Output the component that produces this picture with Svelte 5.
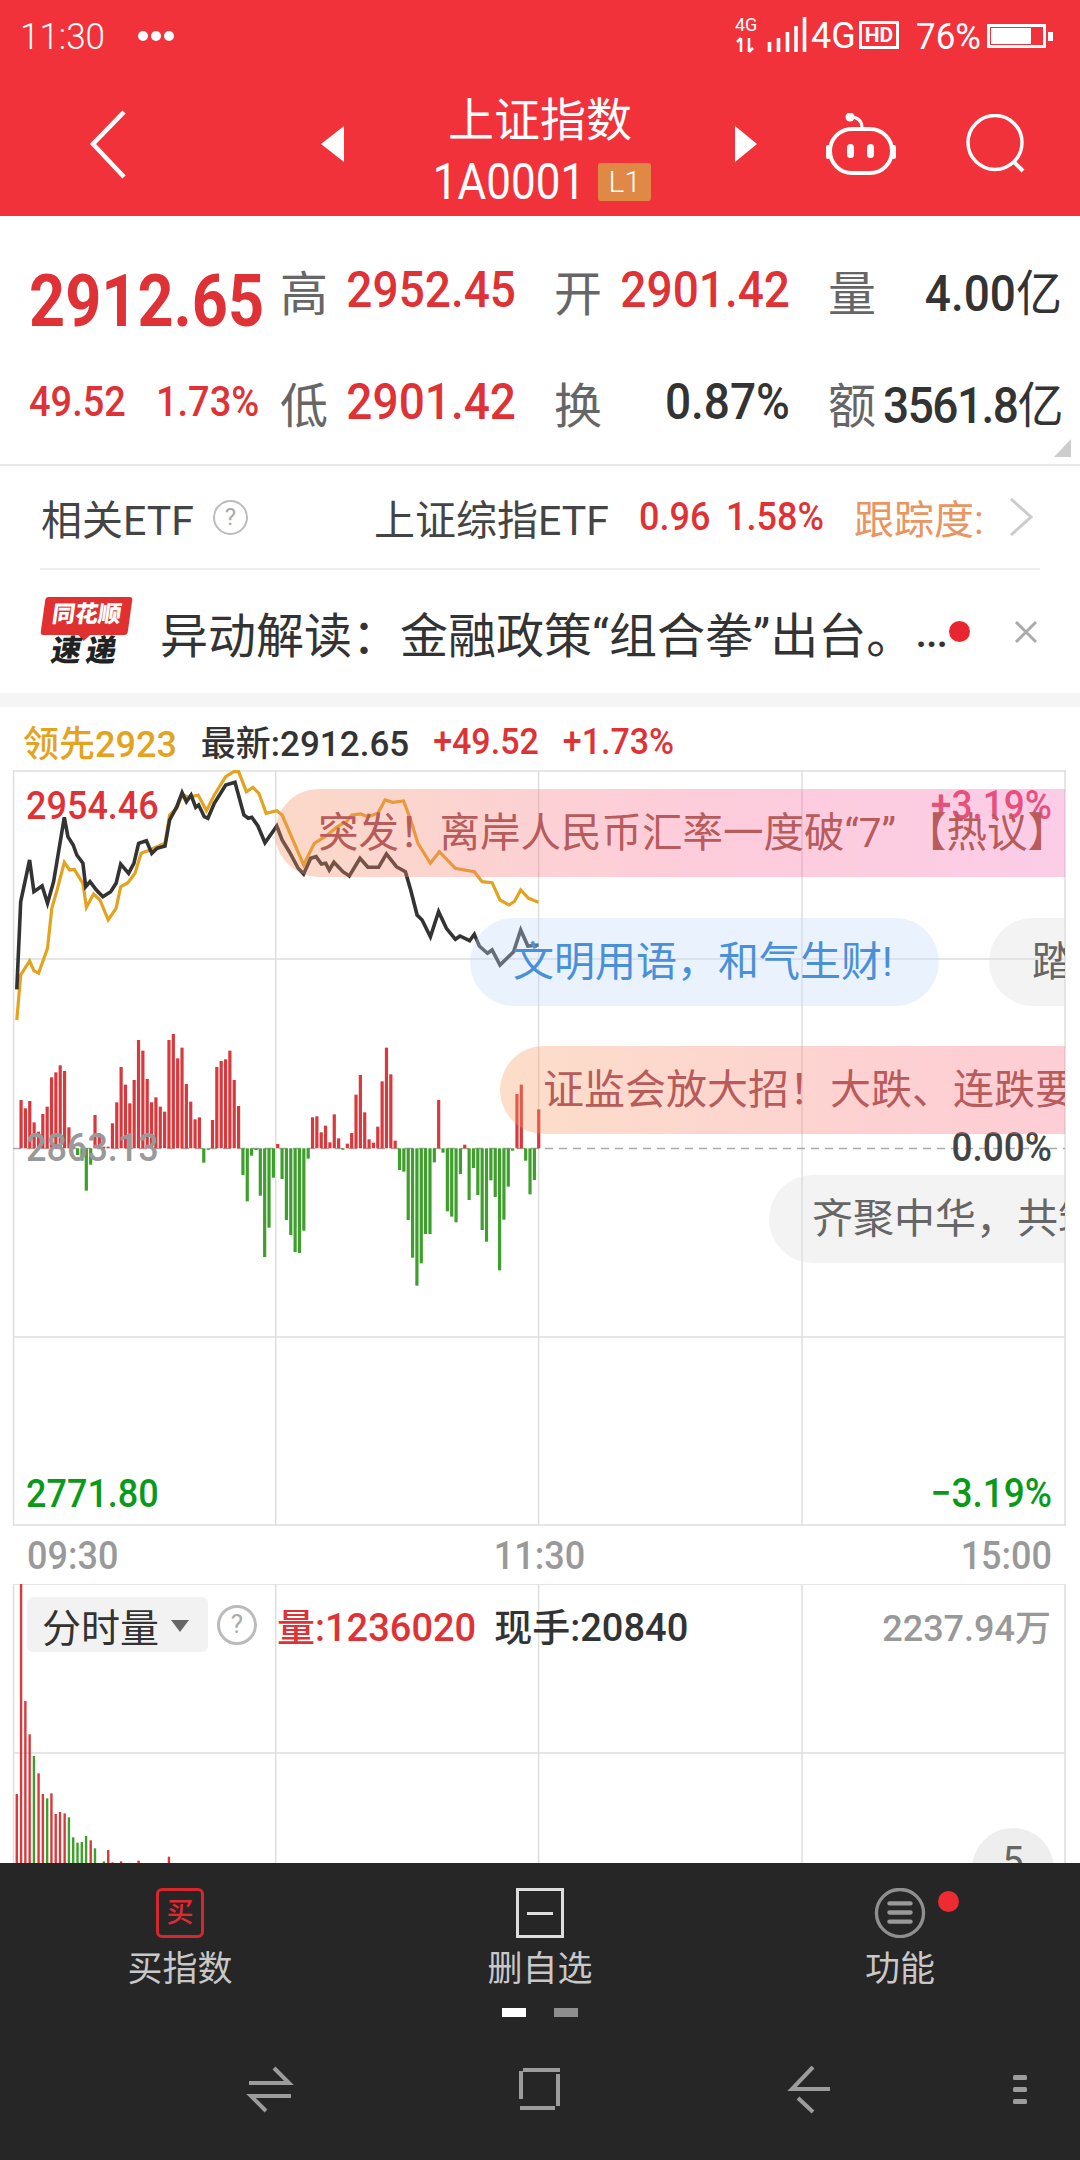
<script>
  // picture coords for the lines, read off at x*2.8, (y-700)*3
  const black = [47,868,58,605,83,480,95,575,118,558,133,610,150,545,180,352,190,410,205,435,215,465,232,490,240,560,252,545,270,570,288,590,310,575,325,550,338,492,360,520,375,490,388,430,410,422,425,460,440,445,462,438,475,360,495,320,510,278,522,305,535,285,548,322,556,315,572,350,582,355,600,310,632,255,658,247,683,345,695,355,705,352,722,378,742,428,775,378,790,420,810,455,835,505,850,522,870,475,885,470,900,492,912,490,922,510,935,487,960,515,978,528,1008,475,1030,502,1060,502,1082,462,1110,500,1135,515,1150,570,1168,645,1182,660,1205,710,1228,635,1250,685,1275,718,1288,708,1315,722,1328,703,1342,738,1365,760,1378,750,1400,795,1438,755,1458,690,1478,738,1508,735];
  const gold = [47,960,58,825,83,783,95,812,108,820,133,745,145,625,160,570,180,487,195,510,208,508,232,550,242,622,262,582,280,600,303,660,325,625,338,560,358,548,378,520,395,460,420,450,440,440,462,430,475,345,495,325,510,285,530,292,555,285,578,332,600,285,632,230,655,215,668,215,690,275,708,262,725,280,745,340,775,332,790,345,820,420,850,495,880,430,910,410,945,380,970,365,985,345,1010,342,1030,350,1058,340,1078,300,1100,307,1130,303,1150,360,1170,430,1205,490,1230,455,1275,505,1300,510,1328,515,1350,545,1378,548,1400,600,1425,615,1440,605,1458,570,1480,595,1508,607];
  // top of bar (red, r) or bottom of bar (green, g), same scale
  const flow = [
    "r300","r325","r303","r367","r395","r342","r320","r232","r217","r196","r213","r382","r440","g465","g482","g572","g494","r345","r400","r440",
    "r440","r370","r307","r201","r254","r310","r240","r120","r152","r237","r307","r292","r320","r335","r120","r102","r175","r143","r252","r305",
    "r358","r352","g488","g447","r360","r201","r183","r178","r152","r240","r318","g525","g604","g467","g450","g587","g771","g683","g533","r432",
    "g537","g660","g705","g756","g759","g692","g476","r352","r349","r397","r377","r427","r343","r415","g448","r431","r399","r284","r225","r337",
    "r418","r428","r380","r244","r143","r223","r422","g510","g515","g660","g773","g857","g790","g702","g702","g487","r300","g458","g634","g650",
    "g667","g522","r434","g600","g504","g585","g690","g725","g541","g591","g811","g659","g560","g452","r282","r254","g482","g583","g540","r328"
  ];
  const flowBars = flow.map((b, i) => {
    const y = 1000 + Number(b.slice(1)) / 3;
    const base = 1148.3;
    return {
      x: (59 + i * 12.18) / 2.8 - 1.6,
      y: Math.min(y, base),
      h: Math.max(Math.abs(y - base), 1.5),
      up: b[0] === "r",
    };
  });
  const volume = [
    [47,822,1],[59,190,1],[71,543,1],[83,643,1],[95,708,0],[108,760,1],[120,822,1],[132,835,0],[144,820,1],[156,882,1],[168,876,1],[181,880,1],[193,892,0],
    [205,952,0],[217,968,0],[229,966,0],[241,948,0],[254,961,1],[266,985,0],[291,1024,0],[303,990,1],[315,1027,1],[339,1024,1],[388,1022,1],[473,1010,1]
  ];
  const line = (a) => {
    let out = [];
    for (let i = 0; i < a.length; i += 2) out.push(`${(a[i] / 2.8).toFixed(1)},${(700 + a[i + 1] / 3).toFixed(1)}`);
    return out.join(" ");
  };
  const vlines = [13.6, 275.7, 538.6, 802, 1065];
</script>

<div class="app">
  <header class="top">
    <div class="status">
      <span class="clock">11:30</span>
      <span class="more"><i></i><i></i><i></i></span>
      <svg class="net" width="72" height="40" viewBox="733 17 72 40">
        <text x="733" y="32" fill="#fff" font-size="18" font-family="Roboto">4G</text>
        <path d="M739 53V39M735 43l4-4M747 39v14M751 49l-4 4" stroke="#fff" stroke-width="2.500" fill="none" />
        <path d="M767.500 53V43M776.500 53V39M785.500 53V33M794 53V27M802.500 53V18" stroke="#fff" stroke-width="3.600" fill="none" />
      </svg>
      <span class="sig">4G</span>
      <span class="hd">HD</span>
      <span class="pct">76%</span>
      <span class="batt"><i></i></span>
      <span class="nub"></span>
    </div>
    <nav class="bar">
      <svg class="back" width="40" height="70" viewBox="0 0 40 70"><path d="M34 3 3 35l31 33" fill="none" stroke="#fff" stroke-width="4.500" /></svg>
      <span class="tri left"></span>
      <div class="title">
        <div class="name">上证指数</div>
        <div class="code"><span class="digits">1A0001</span><span class="lv">L1</span></div>
      </div>
      <span class="tri right"></span>
      <svg class="robot" width="70" height="62" viewBox="826 111 70 62">
        <rect x="830" y="127" width="62" height="44" rx="22" fill="none" stroke="#fff" stroke-width="4" />
        <path d="M828 145v10M894 145v10" stroke="#fff" stroke-width="4" stroke-linecap="round" />
        <path d="M850 115q12 0 12 11" fill="none" stroke="#fff" stroke-width="3" />
        <circle cx="850" cy="115" r="4.500" fill="#fff" />
        <rect x="847" y="142" width="7" height="14" rx="3.500" fill="#fff" />
        <rect x="867" y="142" width="7" height="14" rx="3.500" fill="#fff" />
      </svg>
      <svg class="search" width="60" height="60" viewBox="966 114 60 60">
        <circle cx="995" cy="142.500" r="27" fill="none" stroke="#fff" stroke-width="3.500" />
        <path d="M1014 162l9 9" stroke="#fff" stroke-width="4" />
      </svg>
    </nav>
  </header>

  <section class="quote">
    <div class="price red">2912.65</div>
    <div class="cell"><b>高</b><span class="red">2952.45</span></div>
    <div class="cell"><b>开</b><span class="red">2901.42</span></div>
    <div class="cell last"><b>量</b><span>4.00<em>亿</em></span></div>
    <div class="chg red"><span>49.52</span><span>1.73%</span></div>
    <div class="cell"><b>低</b><span class="red">2901.42</span></div>
    <div class="cell"><b>换</b><span>0.87%</span></div>
    <div class="cell last"><b>额</b><span class="tight">3561.8<em>亿</em></span></div>
    <span class="corner"></span>
  </section>

  <div class="etf">
    <span class="etf-label">相关ETF</span>
    <span class="help">?</span>
    <span class="etf-name">上证综指ETF</span>
    <span class="etf-val red">0.96</span>
    <span class="etf-pct red">1.58%</span>
    <span class="etf-track">跟踪度:</span>
    <svg class="chev" width="24" height="38" viewBox="0 0 24 38"><path d="M2 1l20 18L2 37" fill="none" stroke="#ccc" stroke-width="3" /></svg>
  </div>

  <div class="news">
    <div class="logo">
      <div class="logo-top">同花顺</div>
      <div class="logo-bot">速递</div>
    </div>
    <div class="news-text">异动解读：金融政策“组合拳”出台。</div>
    <span class="news-more">...</span>
    <span class="news-dot"></span>
    <svg class="news-x" width="24" height="24" viewBox="0 0 24 24"><path d="M2 2l20 20M22 2L2 22" stroke="#aaa" stroke-width="3" /></svg>
  </div>

  <div class="strip"></div>

  <div class="legend">
    <span class="gold">领先2923</span>
    <span class="now">最新:2912.65</span>
    <span class="red">+49.52</span>
    <span class="red">+1.73%</span>
  </div>

  <div class="chart">
    <svg width="1080" height="756" viewBox="0 770 1080 756">
      <g stroke="#dedede" stroke-width="1.500">
        <path d="M13 771H1065M13 959H1065M13 1337H1065M13 1525H1065" />
        {#each vlines as x}
          <path d="M{x} 770V1526" />
        {/each}
      </g>
      <path d="M13 1148.500H1065" stroke="#aaa" stroke-width="1.500" stroke-dasharray="8 6" />
      {#each flowBars as b}
        <rect x={b.x} y={b.y} width="3.200" height={b.h} fill={b.up ? "#d8393d" : "#3f9f2c"} />
      {/each}
      <polyline points={line(gold)} fill="none" stroke="#e3a31f" stroke-width="3.200" />
      <polyline points={line(black)} fill="none" stroke="#333" stroke-width="3.600" />
    </svg>
    <div class="over">
      <span class="tag red hi">2954.46</span>
      <span class="tag base">2863.13</span>
      <span class="tag low">2771.80</span>
      <span class="tag r hi up">+3.19%</span>
      <span class="tag r zero">0.00%</span>
      <span class="tag r low">−3.19%</span>
      <div class="pill hot p1">突发！离岸人民币汇率一度破“7”&nbsp;【热议】</div>
      <div class="pill blue p2">文明用语，和气生财!</div>
      <div class="pill grey p3">踏</div>
      <div class="pill warm p4">证监会放大招！大跌、连跌要</div>
      <div class="pill grey p5">齐聚中华，共筑</div>
    </div>
  </div>

  <div class="times"><span>09:30</span><span>11:30</span><span>15:00</span></div>

  <div class="lower">
    <svg width="1080" height="279" viewBox="0 1584 1080 279">
      <g stroke="#dedede" stroke-width="1.500">
        <path d="M13 1584H1065M13 1753H1065" />
        {#each vlines as x}
          <path d="M{x} 1584V1863" />
        {/each}
      </g>
      {#each volume as v}
        <rect x={v[0] / 2.8 - 1.2} y={1520 + v[1] / 3} width="2.400" height="350" fill={v[2] ? "#d8393d" : "#3f9f2c"} />
      {/each}
    </svg>
    <div class="lower-head">
      <span class="sel">分时量<i></i></span>
      <span class="help big">?</span>
      <span class="vol red">量:1236020</span>
      <span class="hand">现手:20840</span>
      <span class="amount">2237.94万</span>
    </div>
    <span class="period">5</span>
  </div>

  <footer class="foot">
    <div class="tabs">
      <div class="tab">
        <span class="ico buy">买</span>
        <span>买指数</span>
      </div>
      <div class="tab">
        <span class="ico del"><i></i></span>
        <span>删自选</span>
      </div>
      <div class="tab">
        <svg class="ico" width="54" height="52" viewBox="0 0 54 52">
          <ellipse cx="27" cy="26" rx="24.500" ry="24.500" fill="none" stroke="#8f8f8f" stroke-width="3.500" />
          <path d="M16 16h22M16 25.500h22M16 35h22" stroke="#999" stroke-width="4.500" stroke-linecap="round" />
        </svg>
        <span>功能</span>
        <span class="badge"></span>
      </div>
    </div>
    <div class="pages"><i class="on"></i><i></i></div>
    <svg class="sys" width="1080" height="50" viewBox="0 2065 1080 50">
      <g fill="none" stroke="#9c9c9c" stroke-width="4">
        <path d="M249 2082H289L274 2067M291 2095H251L266 2110" />
        <path d="M523 2069H560M521 2070V2098M558 2073V2105M520 2107H555" />
        <path d="M813 2066L792 2088H830M798 2097L813 2111" />
      </g>
      <g fill="#9c9c9c">
        <rect x="1013" y="2074" width="14" height="5" rx="1.500" />
        <rect x="1013" y="2086" width="14" height="5" rx="1.500" />
        <rect x="1013" y="2098" width="14" height="5" rx="1.500" />
      </g>
    </svg>
  </footer>
</div>

<style>
  :global(body) {
    margin: 0;
    background: #fff;
  }
  .app {
    width: 1080px;
    height: 2160px;
    overflow: hidden;
    display: flex;
    flex-direction: column;
    color: #333;
    font-family: Roboto, "Noto Sans CJK SC", sans-serif;
  }
  .red {
    color: #df3236;
  }

  /* red header */
  .top {
    height: 216px;
    flex: none;
    background: #f1323b;
    color: #fff;
  }
  .status {
    height: 72px;
    display: flex;
    align-items: center;
    padding-left: 20px;
    font-size: 35px;
  }
  .clock {
    width: 118px;
    font-weight: 300;
    transform: scaleY(1.08);
  }
  .more {
    display: flex;
    gap: 3px;
    margin-right: 561px;
  }
  .more i {
    width: 10px;
    height: 10px;
    border-radius: 50%;
    background: #fff;
  }
  .sig {
    width: 48px;
    margin-left: 4px;
    font-size: 36px;
  }
  .hd {
    width: 40px;
    height: 28px;
    margin-top: -2px;
    box-sizing: border-box;
    border: 3px solid #fff;
    font-size: 21px;
    font-weight: 700;
    line-height: 22px;
    text-align: center;
  }
  .pct {
    margin-left: 17px;
    width: 71px;
    font-size: 35px;
    transform: scaleY(1.08);
  }
  .batt {
    width: 59px;
    height: 24px;
    box-sizing: border-box;
    border: 3px solid #fff;
    display: flex;
  }
  .batt i {
    width: 40px;
    background: #fff;
    margin: 1px;
  }
  .nub {
    width: 5px;
    height: 9px;
    margin-left: 2px;
    background: #fff;
  }
  .bar {
    height: 144px;
    display: flex;
    align-items: center;
  }
  .back {
    margin-left: 90px;
    flex: none;
  }
  .tri {
    width: 0;
    height: 0;
    border-top: 18px solid transparent;
    border-bottom: 18px solid transparent;
    flex: none;
  }
  .tri.left {
    margin-left: 191px;
    border-right: 23px solid #fff;
  }
  .tri.right {
    margin-left: 45px;
    border-left: 22px solid #fff;
  }
  .title {
    width: 300px;
    margin: 8px 0 0 46px;
    text-align: center;
  }
  .name {
    font-size: 46px;
    line-height: 52px;
  }
  .code {
    display: flex;
    justify-content: center;
    align-items: center;
    margin-top: 16px;
    padding-left: 4px;
    font-size: 44px;
    line-height: 40px;
  }
  .digits {
    transform: scaleY(1.12);
  }
  .lv {
    width: 53px;
    height: 38px;
    margin-left: 13px;
    background: #e08845;
    border-radius: 3px;
    font-size: 30px;
    font-weight: 300;
    line-height: 38px;
  }
  .robot {
    margin-left: 69px;
    flex: none;
  }
  .search {
    margin-left: 70px;
    flex: none;
  }

  /* quote grid */
  .quote {
    position: relative;
    height: 250px;
    flex: none;
    box-sizing: border-box;
    padding: 18px 18px 0 29px;
    border-bottom: 2px solid #e8e8e8;
    display: grid;
    grid-template-columns: 253px 274px 274px 232px;
    grid-auto-rows: 112px;
    align-items: center;
    font-weight: 500;
  }
  .price {
    font-size: 63px;
    font-weight: 700;
    margin: 22px 0 0 0;
    transform: scaleY(1.16);
  }
  .chg {
    display: flex;
    gap: 30px;
    font-size: 38px;
  }
  .chg span {
    transform: scaleY(1.1);
  }
  .cell {
    display: flex;
    align-items: center;
    justify-content: space-between;
    padding-right: 40px;
    font-size: 46px;
  }
  .cell.last {
    padding-right: 0;
  }
  .cell span {
    transform: scaleY(1.07);
  }
  .cell b {
    margin-left: -2px;
    color: #666;
    font-size: 48px;
    font-weight: 400;
  }
  .cell em {
    font-style: normal;
    font-weight: 400;
  }
  .tight {
    letter-spacing: -1.500px;
  }
  .corner {
    position: absolute;
    right: 9px;
    bottom: 7px;
    width: 0;
    height: 0;
    border-bottom: 18px solid #ccc;
    border-left: 17px solid transparent;
  }

  /* etf row */
  .etf {
    height: 104px;
    flex: none;
    box-sizing: border-box;
    margin: 0 40px;
    border-bottom: 2px solid #eee;
    display: flex;
    align-items: center;
    font-size: 41px;
    color: #444;
  }
  .etf-label {
    width: 172px;
    margin-left: 1px;
    white-space: nowrap;
  }
  .help {
    width: 35px;
    height: 35px;
    box-sizing: border-box;
    border: 2px solid #bbb;
    border-radius: 50%;
    color: #aaa;
    font-size: 24px;
    line-height: 31px;
    text-align: center;
  }
  .etf-name {
    margin-left: 126px;
    width: 265px;
    white-space: nowrap;
  }
  .etf-val {
    font-size: 36px;
    font-weight: 500;
    width: 87px;
    transform: scaleY(1.1);
  }
  .etf-pct {
    font-size: 36px;
    font-weight: 500;
    width: 128px;
    transform: scaleY(1.1);
  }
  .etf-track {
    width: 155px;
    font-size: 40px;
    color: #ea9560;
  }
  .chev {
    flex: none;
  }

  /* news row */
  .news {
    height: 123px;
    flex: none;
    display: flex;
    align-items: center;
  }
  .logo {
    width: 87px;
    margin-left: 43px;
    text-align: center;
    font-weight: 900;
  }
  .logo-top {
    position: relative;
    height: 38px;
    background: #e0302f;
    border-radius: 3px;
    color: #fff;
    font-size: 23px;
    line-height: 36px;
    transform: skewX(-8deg);
  }
  .logo-top::after {
    content: "";
    position: absolute;
    left: 38px;
    top: 38px;
    border-top: 6px solid #e0302f;
    border-left: 6px solid transparent;
    border-right: 6px solid transparent;
  }
  .logo-bot {
    color: #222;
    font-size: 30px;
    line-height: 32px;
    letter-spacing: 5px;
    transform: skewX(-10deg);
  }
  .news-text {
    width: 756px;
    margin-left: 30px;
    font-size: 48px;
    white-space: nowrap;
  }
  .news-more {
    width: 33px;
    margin-top: 6px;
    font-size: 36px;
    font-weight: 700;
  }
  .news-dot {
    width: 21px;
    height: 21px;
    border-radius: 50%;
    background: #e8262f;
    flex: none;
  }
  .news-x {
    margin-left: 44px;
    flex: none;
  }
  .strip {
    height: 14px;
    flex: none;
    background: #f5f5f5;
  }
  .legend {
    height: 63px;
    flex: none;
    display: flex;
    align-items: center;
    padding: 4px 0 0 23px;
    box-sizing: border-box;
    gap: 24px;
    font-size: 36px;
    font-weight: 500;
  }
  .legend .now {
    font-size: 35px;
  }
  .legend .red {
    font-size: 34px;
    transform: scaleY(1.06);
  }
  .gold {
    color: #e3a31f;
  }
  .now {
    color: #333;
  }

  /* charts */
  .chart {
    position: relative;
    height: 756px;
    flex: none;
  }
  .chart svg,
  .lower svg {
    display: block;
  }
  .over {
    position: absolute;
    left: 0;
    top: 0;
    width: 1065px;
    height: 100%;
    overflow: hidden;
  }
  .tag {
    position: absolute;
    left: 26px;
    font-size: 36px;
    font-weight: 500;
    line-height: 36px;
    transform: scaleY(1.08);
  }
  .tag.r {
    left: auto;
    right: 13px;
    font-size: 37px;
  }
  .hi {
    top: 18px;
  }
  .up {
    color: #e04060;
  }
  .base {
    top: 360px;
    color: #999;
  }
  .low {
    top: 706px;
    color: #0a9a1a;
  }
  .zero {
    top: 360px;
    color: #444;
  }
  /* only the fill is see-through: the chart lines show through it, the text sits on top */
  .pill {
    position: absolute;
    height: 88px;
    border-radius: 44px 0 0 44px;
    box-sizing: border-box;
    padding-left: 43px;
    font-size: 41px;
    line-height: 88px;
    white-space: nowrap;
    color: #666;
  }
  .hot {
    color: #b85b5b;
    background: linear-gradient(90deg, rgba(243, 146, 97, 0.35), rgba(250, 110, 150, 0.35) 50%, rgba(243, 111, 189, 0.35));
  }
  .warm {
    color: #b85b5b;
    background: linear-gradient(90deg, rgba(248, 160, 100, 0.35), rgba(250, 120, 130, 0.35) 60%, rgba(250, 110, 140, 0.35));
  }
  .blue {
    color: #4a90d9;
    background: rgba(194, 220, 248, 0.35);
    border-radius: 44px;
  }
  .grey {
    background: rgba(220, 220, 220, 0.35);
  }
  .p1 {
    left: 275px;
    top: 19px;
    width: 830px;
    font-size: 40.500px;
  }
  .p2 {
    left: 470px;
    top: 148px;
    width: 469px;
  }
  .p3 {
    left: 989px;
    top: 148px;
    width: 200px;
  }
  .p4 {
    left: 500px;
    top: 276px;
    width: 700px;
  }
  .p5 {
    left: 769px;
    top: 405px;
    width: 500px;
  }
  .times {
    height: 58px;
    flex: none;
    box-sizing: border-box;
    display: flex;
    justify-content: space-between;
    align-items: center;
    padding: 2px 28px 0 27px;
    font-size: 36px;
    color: #999;
    font-weight: 500;
  }
  .times span {
    transform: scaleY(1.08);
  }
  .lower {
    position: relative;
    height: 279px;
    flex: none;
    overflow: hidden;
  }
  .lower-head {
    position: absolute;
    left: 27px;
    right: 29px;
    top: 13px;
    display: flex;
    align-items: center;
    font-size: 38px;
  }
  .sel {
    width: 181px;
    height: 55px;
    box-sizing: border-box;
    padding-left: 15px;
    background: #f2f2f2;
    border-radius: 6px;
    display: flex;
    align-items: center;
    font-size: 39px;
  }
  .sel i {
    margin: 3px 0 0 12px;
    border-top: 12px solid #666;
    border-left: 9px solid transparent;
    border-right: 9px solid transparent;
  }
  .help.big {
    width: 40px;
    height: 40px;
    margin-left: 9px;
    border-width: 3px;
    line-height: 33px;
    font-size: 26px;
  }
  .vol {
    margin-left: 20px;
    font-weight: 500;
  }
  .hand {
    margin-left: 18px;
    font-weight: 500;
  }
  .amount {
    margin-left: auto;
    font-size: 36px;
    font-weight: 500;
    color: #999;
  }
  .period {
    position: absolute;
    left: 972px;
    top: 244px;
    width: 82px;
    height: 82px;
    border-radius: 50%;
    background: #eee;
    color: #666;
    font-size: 38px;
    line-height: 66px;
    text-align: center;
  }

  /* footer */
  .foot {
    flex: 1;
    background: #262626;
    color: #c8c8c8;
    font-size: 35px;
  }
  .tabs {
    display: grid;
    grid-template-columns: repeat(3, 360px);
    padding-top: 25px;
  }
  .tab {
    position: relative;
    display: flex;
    flex-direction: column;
    align-items: center;
    line-height: 46px;
  }
  .ico {
    height: 50px;
    margin-bottom: 9px;
    box-sizing: border-box;
    display: flex;
    align-items: center;
    justify-content: center;
  }
  .buy {
    width: 48px;
    border: 3px solid #d8262f;
    border-radius: 6px;
    color: #e02a33;
    font-size: 27px;
    font-weight: 500;
  }
  .del {
    width: 48px;
    border: 3px solid #ddd;
  }
  .del i {
    width: 26px;
    height: 3px;
    background: #ddd;
  }
  .badge {
    position: absolute;
    left: 218px;
    top: 3px;
    width: 21px;
    height: 21px;
    border-radius: 50%;
    background: #ee2b33;
  }
  .pages {
    display: flex;
    gap: 28px;
    justify-content: center;
    margin-top: 15px;
  }
  .pages i {
    width: 24px;
    height: 9px;
    background: #8e8e8e;
  }
  .pages i.on {
    background: #fff;
  }
  .sys {
    display: block;
    margin-top: 49px;
  }
</style>
